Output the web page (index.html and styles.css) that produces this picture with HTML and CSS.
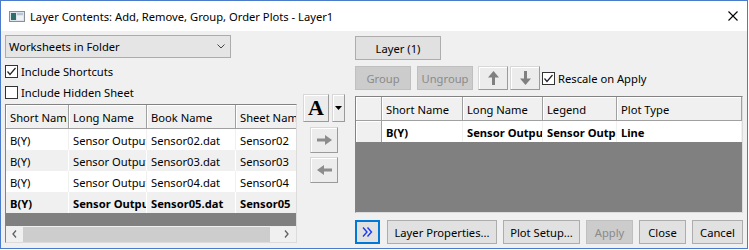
FILE: index.html
```html
<!DOCTYPE html>
<html lang="en">
<head>
    <meta charset="UTF-8">
    <title>Layer Contents</title>
    <link rel="stylesheet" href="styles.css">
</head>
<body>

<div class="window">
    <div class="titlebar">
        <svg class="app-icon" viewBox="0 0 16 11">
            <rect x="0.5" y="0.5" width="15" height="10" fill="#dde6ee" stroke="#8a8f96"/>
            <rect x="2" y="2" width="5" height="7" fill="#2f6f6a"/>
            <rect x="8" y="2" width="6" height="2" fill="#b9c6d2"/>
            <rect x="8" y="5" width="6" height="4" fill="#eef2f5"/>
        </svg>
        <span class="title">Layer Contents: Add, Remove, Group, Order Plots - Layer1</span>
        <svg class="close-x" viewBox="0 0 10 10">
            <path d="M0.5 0.5 L9.5 9.5 M9.5 0.5 L0.5 9.5" stroke="#000" stroke-width="1.1"/>
        </svg>
    </div>

    <div class="dialog">
        <!-- left: worksheets list -->
        <div class="left-pane">
            <div class="combo">
                <span>Worksheets in Folder</span>
                <svg class="chevron" viewBox="0 0 8 5"><path d="M0.5 0.5 L4 4 L7.5 0.5" fill="none" stroke="#444"/></svg>
            </div>
            <div class="check first">
                <span class="box"><svg viewBox="0 0 11 11"><path d="M1.5 5.5 L4 8.5 L9.5 2" fill="none" stroke="#222" stroke-width="1.2"/></svg></span>
                Include Shortcuts
            </div>
            <div class="check">
                <span class="box"></span>
                Include Hidden Sheet
            </div>

            <div class="grid left-grid">
                <div class="grid-view">
                    <table class="sheet-table">
                        <thead>
                            <tr>
                                <th class="c-short">Short Nam</th>
                                <th class="c-long">Long Name</th>
                                <th class="c-book">Book Name</th>
                                <th class="c-sheet">Sheet Nam</th>
                            </tr>
                        </thead>
                        <tbody>
                            <tr><td>B(Y)</td><td>Sensor Output</td><td>Sensor02.dat</td><td>Sensor02</td></tr>
                            <tr class="alt"><td>B(Y)</td><td>Sensor Output</td><td>Sensor03.dat</td><td>Sensor03</td></tr>
                            <tr><td>B(Y)</td><td>Sensor Output</td><td>Sensor04.dat</td><td>Sensor04</td></tr>
                            <tr class="alt current"><td>B(Y)</td><td>Sensor Output</td><td>Sensor05.dat</td><td>Sensor05</td></tr>
                        </tbody>
                    </table>
                    <div class="empty"></div>
                </div>
                <div class="hscroll">
                    <span class="scroll-btn"><svg viewBox="0 0 5 8"><path d="M4 0.5 L1 4 L4 7.5" fill="none" stroke="#606060" stroke-width="1.3"/></svg></span>
                    <span class="thumb"></span>
                    <span class="scroll-btn"><svg viewBox="0 0 5 8"><path d="M1 0.5 L4 4 L1 7.5" fill="none" stroke="#606060" stroke-width="1.3"/></svg></span>
                </div>
            </div>
        </div>

        <!-- middle: font and add/remove -->
        <div class="mid-pane">
            <div class="font-tools">
                <button class="tool-btn font-btn">A</button>
                <button class="tool-btn drop-btn"><svg viewBox="0 0 7 4"><path d="M0 0 L7 0 L3.5 4 Z" fill="#000"/></svg></button>
            </div>
            <button class="tool-btn arrow-btn">
                <svg viewBox="0 0 15 10"><rect x="0" y="3.5" width="9" height="3" fill="#8c8c8c"/><path d="M8 0 L15 5 L8 10 Z" fill="#8c8c8c"/></svg>
            </button>
            <button class="tool-btn arrow-btn">
                <svg viewBox="0 0 15 10"><rect x="6" y="3.5" width="9" height="3" fill="#8c8c8c"/><path d="M7 0 L0 5 L7 10 Z" fill="#8c8c8c"/></svg>
            </button>
        </div>

        <!-- right: layer contents -->
        <div class="right-pane">
            <button class="btn layer-btn">Layer (1)</button>

            <div class="toolbar">
                <button class="btn disabled group-btn">Group</button>
                <button class="btn disabled ungroup-btn">Ungroup</button>
                <button class="tool-btn order-btn">
                    <svg viewBox="0 0 11 14"><path d="M0 6.5 L5.5 0 L11 6.5 Z" fill="#808080"/><rect x="4" y="6" width="3" height="8" fill="#808080"/></svg>
                </button>
                <button class="tool-btn order-btn">
                    <svg viewBox="0 0 11 14"><path d="M0 7.5 L5.5 14 L11 7.5 Z" fill="#808080"/><rect x="4" y="0" width="3" height="8" fill="#808080"/></svg>
                </button>
                <div class="check">
                    <span class="box"><svg viewBox="0 0 11 11"><path d="M1.5 5.5 L4 8.5 L9.5 2" fill="none" stroke="#222" stroke-width="1.2"/></svg></span>
                    Rescale on Apply
                </div>
            </div>

            <div class="grid right-grid">
                <table class="plot-table">
                    <thead>
                        <tr>
                            <th class="c-row"></th>
                            <th class="c-pshort">Short Name</th>
                            <th class="c-plong">Long Name</th>
                            <th class="c-legend">Legend</th>
                            <th class="c-type">Plot Type</th>
                        </tr>
                    </thead>
                    <tbody>
                        <tr class="current"><td class="row-head"></td><td>B(Y)</td><td>Sensor Output</td><td>Sensor Output</td><td>Line</td></tr>
                    </tbody>
                </table>
                <div class="empty"></div>
            </div>

            <div class="actions">
                <button class="btn more-btn">
                    <svg viewBox="0 0 11 10"><path d="M1 0.5 L5 5 L1 9.5 M5.5 0.5 L9.5 5 L5.5 9.5" fill="none" stroke="#1a3cf0" stroke-width="1.4"/></svg>
                </button>
                <button class="btn props-btn">Layer Properties...</button>
                <button class="btn setup-btn">Plot Setup...</button>
                <button class="btn disabled apply-btn">Apply</button>
                <button class="btn close-btn">Close</button>
                <button class="btn cancel-btn">Cancel</button>
            </div>
        </div>
    </div>
</div>

</body>
</html>
```

FILE: styles.css
```css
* {
    box-sizing: border-box;
}
body {
    margin: 0;
    font-family: "Noto Sans", sans-serif;
    font-size: 11.2px;
    color: #000;
    background: #fff;
}
.window {
    width: 748px;
    height: 249px;
    border: 1px solid #4a7ccb;
    display: flex;
    flex-direction: column;
}
.titlebar {
    height: 30px;
    flex: none;
    display: flex;
    align-items: center;
    padding-left: 8px;
    background: #fff;
}
.app-icon {
    width: 16px;
    height: 11px;
    margin-right: 5px;
}
.title {
    flex: 1;
}
.close-x {
    width: 10px;
    height: 10px;
    margin-right: 9px;
}
.dialog {
    flex: 1;
    display: flex;
    background: #f0f0f0;
}

/* left pane */
.left-pane {
    width: 292px;
    margin-left: 4px;
    padding-top: 4px;
    display: flex;
    flex-direction: column;
}
.combo {
    width: 226px;
    height: 23px;
    flex: none;
    border: 1px solid #acacac;
    background: #e5e5e5;
    display: flex;
    align-items: center;
    justify-content: space-between;
    padding: 0 5px 0 3px;
}
.chevron {
    width: 8px;
    height: 5px;
}
.check {
    display: flex;
    align-items: center;
    height: 13px;
    gap: 3px;
    margin-top: 8px;
    white-space: nowrap;
}
.check.first {
    margin-top: 7px;
}
.box {
    width: 13px;
    height: 13px;
    flex: none;
    border: 1px solid #333;
    background: #fff;
    display: flex;
}
.box svg {
    width: 11px;
    height: 11px;
}

.grid {
    border: 1px solid;
    border-color: #828282 #dcdcdc #dcdcdc #828282;
    background: #808080;
    display: flex;
    flex-direction: column;
    overflow: hidden;
}
.left-grid {
    margin-top: 5px;
    height: 139px;
}
.grid-view {
    flex: 1;
    overflow: hidden;
    display: flex;
    flex-direction: column;
}
.empty {
    flex: 1;
    background: #808080;
}
table {
    border-collapse: separate;
    border-spacing: 0;
    table-layout: fixed;
    flex: none;
}
th, td {
    padding: 1px 4px 0;
    text-align: left;
    font-weight: normal;
    white-space: nowrap;
    overflow: hidden;
}
th {
    height: 24px;
    background: #f0f0f0;
    border-right: 1px solid #a0a0a0;
    border-bottom: 1px solid #a0a0a0;
    box-shadow: inset 1px 1px #fff;
}
td {
    height: 21px;
    background: #fff;
    border-right: 1px solid #f0f0f0;
}
tr.alt td {
    background: #f0f0f0;
    border-right-color: #fff;
}
tr.current td {
    font-weight: bold;
}
.sheet-table {
    width: 320px;
}
.c-short { width: 63px; }
.c-long { width: 78px; }
.c-book { width: 89px; }
.c-sheet { width: 90px; }

.hscroll {
    height: 16px;
    flex: none;
    background: #f0f0f0;
    display: flex;
    align-items: center;
}
.scroll-btn {
    width: 17px;
    height: 16px;
    display: flex;
    align-items: center;
    justify-content: center;
}
.scroll-btn svg {
    width: 5px;
    height: 8px;
}
.thumb {
    width: 247px;
    height: 15px;
    background: #cdcdcd;
    margin-right: 8px;
}

/* middle pane */
.mid-pane {
    width: 58px;
    padding: 63px 0 0 6px;
    display: flex;
    flex-direction: column;
    align-items: flex-start;
}
.font-tools {
    display: flex;
    gap: 3px;
}
.tool-btn {
    padding: 0;
    background: #ececec;
    border: 1px solid;
    border-color: #d8d8d8 #9a9a9a #9a9a9a #d8d8d8;
    box-shadow: inset 1px 1px #fff;
    display: flex;
    align-items: center;
    justify-content: center;
}
.font-btn {
    width: 26px;
    height: 28px;
    font-family: "Liberation Serif", serif;
    font-weight: bold;
    font-size: 22px;
    color: #000;
}
.drop-btn {
    width: 13px;
    height: 28px;
}
.drop-btn svg {
    width: 7px;
    height: 4px;
}
.arrow-btn {
    width: 28px;
    height: 26px;
    margin: 5px 0 0 7px;
}
.arrow-btn + .arrow-btn {
    margin-top: 4px;
}
.arrow-btn svg {
    width: 15px;
    height: 10px;
}

/* right pane */
.right-pane {
    width: 388px;
    padding-top: 5px;
    display: flex;
    flex-direction: column;
}
.btn {
    font: inherit;
    height: 24px;
    padding: 0;
    background: #e1e1e1;
    border: 1px solid #adadad;
    color: #000;
}
.btn.disabled {
    background: #cccccc;
    border-color: #bfbfbf;
    color: #8a8a8a;
}
.layer-btn {
    width: 86px;
}
.toolbar {
    display: flex;
    align-items: center;
    height: 24px;
    margin-top: 6px;
}
.group-btn {
    width: 56px;
    margin-right: 6px;
}
.ungroup-btn {
    width: 56px;
    margin-right: 5px;
}
.order-btn {
    width: 30px;
    height: 24px;
    margin-right: 2px;
}
.order-btn svg {
    width: 11px;
    height: 14px;
}
.toolbar .check {
    margin-top: 0;
}

.right-grid {
    margin-top: 6px;
    height: 117px;
}
.plot-table {
    width: 386px;
}
.c-row { width: 26px; }
.c-pshort { width: 81px; }
.c-plong { width: 80px; }
.c-legend { width: 74px; }
.c-type { width: 125px; }
td.row-head {
    background: #f0f0f0;
    border-right: 1px solid #a0a0a0;
    box-shadow: inset 1px 1px #fff;
}

.actions {
    display: flex;
    margin-top: 7px;
    gap: 6px;
}
.more-btn {
    width: 25px;
    margin-right: 1px;
    border: 2px solid #0078d7;
    display: flex;
    align-items: center;
    justify-content: center;
}
.more-btn svg {
    width: 11px;
    height: 10px;
}
.props-btn { width: 110px; }
.setup-btn { width: 77px; }
.apply-btn { width: 47px; }
.close-btn { width: 47px; }
.cancel-btn { width: 51px; }
```
